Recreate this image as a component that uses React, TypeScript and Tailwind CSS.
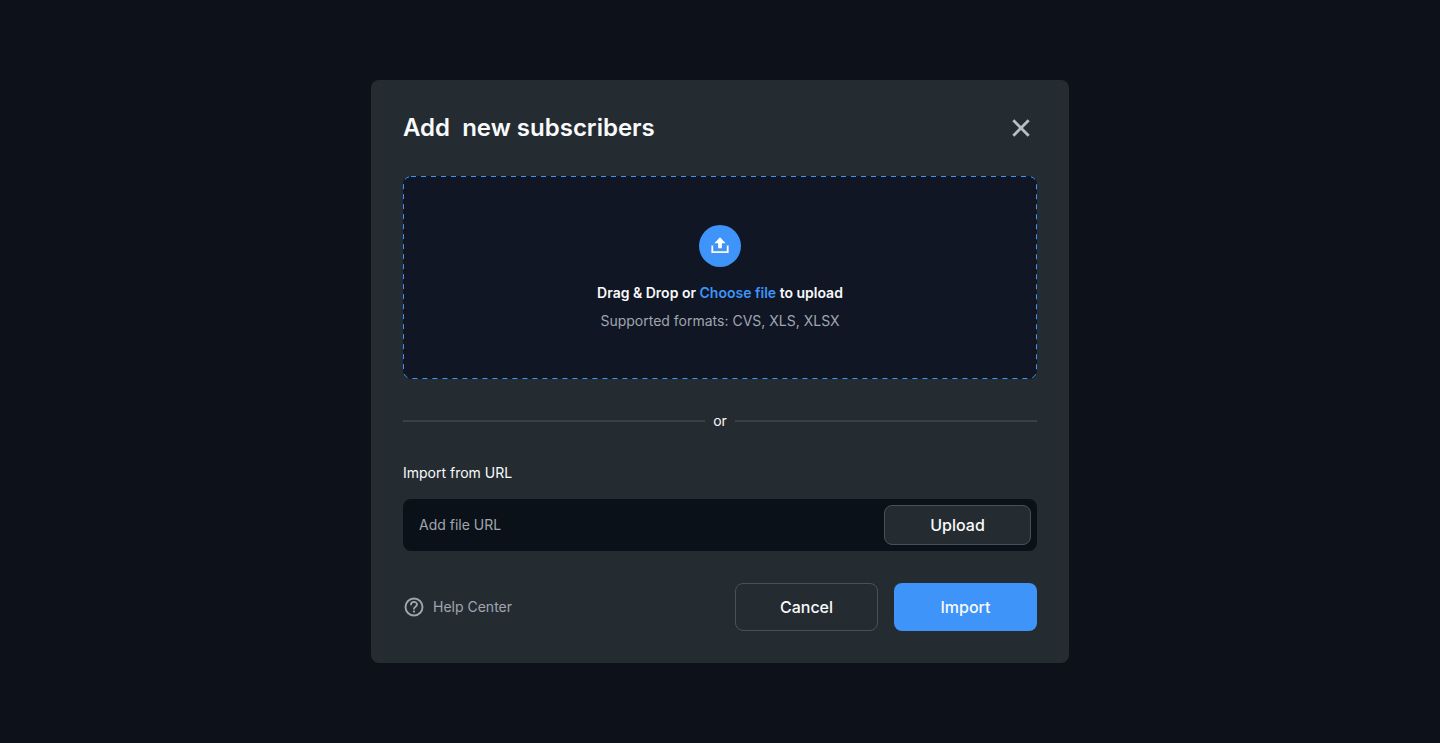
import React from "react";

function CloseIcon() {
  return (
    <svg className="size-8" viewBox="0 0 32 32" fill="none" stroke="currentColor" strokeWidth="2.8" aria-hidden="true">
      <path d="M8.3 8.3 23.7 23.7M23.7 8.3 8.3 23.7" />
    </svg>
  );
}

function UploadIcon() {
  return (
    <svg className="size-6" viewBox="0 0 24 24" aria-hidden="true">
      <path d="M12 3.2 6.4 9.2H10.1V14.3H13.9V9.2H17.6Z" fill="currentColor" />
      <path d="M4.3 11.5V18.2H19.7V11.5" fill="none" stroke="currentColor" strokeWidth="1.8" />
    </svg>
  );
}

function HelpIcon() {
  return (
    <svg className="size-[22px]" viewBox="0 0 22 22" fill="none" stroke="currentColor" aria-hidden="true">
      <circle cx="11" cy="11" r="8.5" strokeWidth="1.9" />
      <path d="M8 8.6a3 2.8 0 0 1 6 0c0 2-3 2.2-3 4.2" strokeWidth="1.8" strokeLinecap="round" />
      <circle cx="11" cy="15.6" r="1.15" fill="currentColor" stroke="none" />
    </svg>
  );
}

function DashedOutline() {
  return (
    <svg className="pointer-events-none absolute inset-0 size-full" fill="none" aria-hidden="true">
      <rect
        x="0.5"
        y="0.5"
        rx="7.5"
        className="h-[calc(100%-1px)] w-[calc(100%-1px)] stroke-[#3e94f8]"
        strokeDasharray="5 5"
      />
    </svg>
  );
}

export default function App() {
  return (
    <main className="flex min-h-screen items-center justify-center bg-[#0c111a] font-['Inter',sans-serif] text-sm leading-5 text-[#f8fafc]">
      <section
        role="dialog"
        aria-labelledby="dialog-title"
        className="flex w-full max-w-[698px] flex-col gap-8 rounded-lg bg-[#252c31] p-8"
      >
        <header className="flex items-center justify-between">
          <h1 id="dialog-title" className="text-2xl leading-8 font-semibold whitespace-pre">
            Add  new subscribers
          </h1>
          <button type="button" aria-label="Close" className="text-[#b8bec6]">
            <CloseIcon />
          </button>
        </header>

        <div className="relative flex min-h-[203px] flex-col items-center justify-center rounded-lg bg-[#101624]">
          <DashedOutline />
          <span className="mb-4 flex size-[42px] items-center justify-center rounded-full bg-[#3e94f8] text-white">
            <UploadIcon />
          </span>
          <p className="mb-2 font-semibold">
            Drag &amp; Drop or{" "}
            <label htmlFor="subscriber-file" className="cursor-pointer text-[#3e94f8]">
              Choose file
            </label>{" "}
            to upload
          </p>
          <input id="subscriber-file" type="file" accept=".csv,.xls,.xlsx" className="sr-only" />
          <p className="text-[#a0a6b0]">Supported formats: CVS, XLS, XLSX</p>
        </div>

        <div className="flex items-center gap-2">
          <span className="h-0.5 flex-1 bg-[#394047]" />
          <span>or</span>
          <span className="h-0.5 flex-1 bg-[#394047]" />
        </div>

        <div className="flex flex-col gap-4">
          <label htmlFor="file-url">Import from URL</label>
          <div className="flex h-[52px] items-center rounded-lg bg-[#0b1119] p-1.5 pl-4">
            <input
              id="file-url"
              type="url"
              placeholder="Add file URL"
              className="min-w-0 flex-1 bg-transparent outline-none placeholder:text-[#a0a6b0]"
            />
            <button
              type="button"
              className="h-10 w-[147px] rounded-lg border border-[#495057] bg-[#252c31] text-base font-medium"
            >
              Upload
            </button>
          </div>
        </div>

        <footer className="flex items-center justify-between">
          <a href="#help" className="flex items-center gap-2 text-[#a0a6b0]">
            <HelpIcon />
            Help Center
          </a>
          <div className="flex gap-4">
            <button type="button" className="h-12 w-[143px] rounded-lg border border-[#495057] text-base font-medium">
              Cancel
            </button>
            <button type="button" className="h-12 w-[143px] rounded-lg bg-[#3e94f8] text-base font-medium">
              Import
            </button>
          </div>
        </footer>
      </section>
    </main>
  );
}
